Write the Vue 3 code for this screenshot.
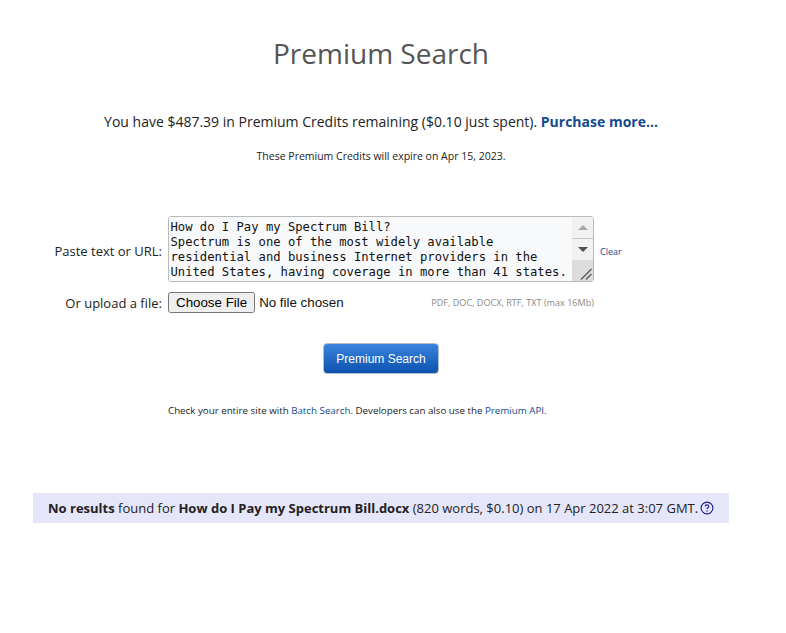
<script setup>
import { ref } from 'vue'

const pasted = ref(`How do I Pay my Spectrum Bill?
Spectrum is one of the most widely available
residential and business Internet providers in the
United States, having coverage in more than 41 states.
Spectrum is known for its good customer service and
reliable connections across the country.`)
</script>

<template>
  <div class="page">
    <h1 class="title">Premium Search</h1>
    <p class="credits">
      You have $487.39 in Premium Credits remaining ($0.10 just spent).
      <a href="#" class="purchase">Purchase more...</a>
    </p>
    <p class="expiry">These Premium Credits will expire on Apr 15, 2023.</p>

    <form class="search-form" @submit.prevent>
      <label class="field-label paste-label" for="pasted">Paste text or URL:</label>
      <div class="paste-wrap">
        <textarea id="pasted" v-model="pasted" class="paste-box" spellcheck="false"></textarea>
        <div class="scrollbar" aria-hidden="true">
          <div class="scroll-btn scroll-up">
            <svg width="10" height="5" viewBox="0 0 10 5"><path d="M5 0l5 5H0z" fill="#a8a8a8" /></svg>
          </div>
          <div class="scroll-btn">
            <svg width="10" height="5" viewBox="0 0 10 5"><path d="M0 0h10L5 5z" fill="#505050" /></svg>
          </div>
          <div class="scroll-corner">
            <svg width="21" height="21" viewBox="0 0 21 21">
              <path d="M9 19.500L19.500 9M14 19.500L19.500 14" fill="none" stroke="#555" stroke-width="1.2" />
            </svg>
          </div>
        </div>
      </div>
      <a href="#" class="clear">Clear</a>

      <label class="field-label" for="upload">Or upload a file:</label>
      <div class="upload-row">
        <input id="upload" type="file" class="file-input" />
        <span class="formats">PDF, DOC, DOCX, RTF, TXT (max 16Mb)</span>
      </div>
    </form>

    <button class="search-btn" type="button">Premium Search</button>

    <p class="batch">
      Check your entire site with <a href="#">Batch Search</a>. Developers can also use the
      <a href="#">Premium API</a>.
    </p>

    <div class="result">
      <b>No results</b> found for <b>How do I Pay my Spectrum Bill.docx</b> (820 words, $0.10) on 17 Apr 2022 at 3:07 GMT.
      <svg class="help" width="14" height="14" viewBox="0 0 14 14" aria-hidden="true">
        <circle cx="7" cy="7" r="5.9" fill="none" stroke="#1a1a8c" stroke-width="1.1" />
        <path d="M5.2 5.5c0-1 .8-1.6 1.8-1.6s1.8.6 1.8 1.5c0 1.3-1.8 1.3-1.8 2.7" fill="none" stroke="#1a1a8c" stroke-width="1.1" />
        <circle cx="7" cy="10" r=".7" fill="#1a1a8c" />
      </svg>
    </div>
  </div>
</template>

<style>
html, body {
  background: #fff;
}
</style>

<style scoped>
.page {
  width: 762px;
  height: 633px;
  box-sizing: border-box;
  padding-top: 33px;
  display: flex;
  flex-direction: column;
  align-items: center;
  font-family: "Open Sans", sans-serif;
  color: #222;
  overflow: hidden;
}

.title {
  margin: 0;
  font-size: 28px;
  line-height: 40px;
  font-weight: 400;
  color: #555;
}

.credits {
  margin: 39px 0 0;
  font-size: 14px;
  line-height: 20px;
}

.purchase {
  color: #134a8e;
  font-weight: 700;
  text-decoration: none;
}

.expiry {
  margin: 17px 0 0;
  font-size: 10.5px;
  line-height: 14px;
}

.search-form {
  width: 100%;
  margin-top: 53px;
  display: grid;
  grid-template-columns: 162px 426px auto;
  column-gap: 6px;
  row-gap: 10px;
  align-items: center;
}

.field-label {
  text-align: right;
  font-size: 13px;
  line-height: 18px;
}

.paste-label {
  padding-top: 4px;
}

.paste-wrap {
  position: relative;
  width: 426px;
  height: 66px;
}

.paste-box {
  display: block;
  width: 100%;
  height: 100%;
  box-sizing: border-box;
  padding: 3px 23px 2px 1.5px;
  border: 1px solid #bbb;
  border-radius: 3px;
  background: #f8f9fb;
  color: #111;
  font-family: "DejaVu Sans Mono", monospace;
  font-size: 12.2px;
  line-height: 15px;
  overflow-y: scroll;
  resize: none;
  outline: none;
}

.scrollbar {
  position: absolute;
  top: 1px;
  right: 1px;
  bottom: 1px;
  width: 21px;
  display: flex;
  flex-direction: column;
  background: #f1f1f1;
  border-radius: 0 2px 2px 0;
  overflow: hidden;
}

.scroll-btn {
  height: 21px;
  display: flex;
  align-items: center;
  justify-content: center;
}

.scroll-up {
  height: 22px;
  box-sizing: border-box;
  border-bottom: 1px solid #c8c8c8;
}

.scroll-corner {
  flex: 1;
  background: #dcdcdc;
}

.scroll-corner svg {
  display: block;
}

.clear {
  padding-top: 4px;
  font-size: 9px;
  color: #134a8e;
  text-decoration: none;
}

.upload-row {
  grid-column: 2 / 4;
  width: 426px;
  display: flex;
  align-items: center;
  justify-content: space-between;
}

.file-input {
  width: 190px;
  font-family: "Liberation Sans", Arial, sans-serif;
  font-size: 13.33px;
  color: #111;
}

.formats {
  font-size: 9.1px;
  color: #888;
  white-space: nowrap;
}

.search-btn {
  margin-top: 30px;
  width: 116px;
  height: 31px;
  border: 1px solid #b5bcc6;
  border-radius: 4px;
  background: linear-gradient(#3a83de, #0a52ad);
  color: #fff;
  font-family: "Liberation Sans", Arial, sans-serif;
  font-size: 12px;
  padding: 0;
}

.batch {
  align-self: flex-start;
  margin: 30px 0 0 168px;
  font-size: 9.75px;
  line-height: 14px;
}

.batch a {
  color: #134a8e;
  text-decoration: none;
}

.result {
  margin-top: 75px;
  width: 696px;
  height: 30px;
  box-sizing: border-box;
  padding-left: 15px;
  white-space: nowrap;
  background: #e6e6fa;
  font-size: 13px;
  line-height: 30px;
}

.help {
  margin-left: -1.5px;
  vertical-align: -2px;
}
</style>
